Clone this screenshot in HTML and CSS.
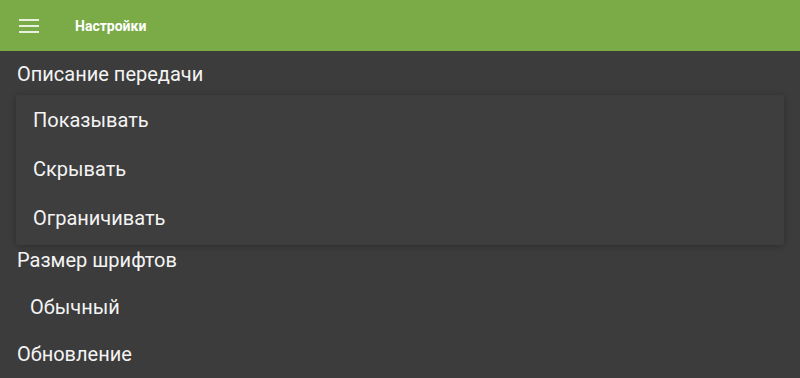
FILE: index.html
```html
<!DOCTYPE html>
<html lang="ru">

<head>
    <meta charset="UTF-8">
    <meta name="viewport" content="width=device-width, initial-scale=1.0">
    <link rel="stylesheet" href="styles.css">
    <title>Настройки</title>
</head>

<body>
    <div class="toolbar">
        <svg class="menu-icon" width="20" height="14" viewBox="0 0 20 14">
            <rect x="0" y="0" width="20" height="2" fill="#e8f0e0" />
            <rect x="0" y="6" width="20" height="2" fill="#e8f0e0" />
            <rect x="0" y="12" width="20" height="2" fill="#e8f0e0" />
        </svg>
        <div class="title">Настройки</div>
    </div>

    <div class="settings">
        <div class="pref">Описание передачи</div>
        <div class="popup">
            <div class="option">Показывать</div>
            <div class="option">Скрывать</div>
            <div class="option">Ограничивать</div>
        </div>
        <div class="pref">Размер шрифтов</div>
        <div class="value">Обычный</div>
        <div class="pref">Обновление</div>
    </div>
</body>

</html>
```

FILE: styles.css
```css
* {
    margin: 0;
    padding: 0;
    box-sizing: border-box;
}

body {
    background: #3c3c3c;
    font-family: Roboto, "Noto Sans", sans-serif;
    color: #f4f4f4;
    overflow: hidden;
}

.toolbar {
    height: 51px;
    background: #7aab47;
    display: flex;
    align-items: center;
    padding-left: 19px;
}

.menu-icon {
    display: block;
    margin-top: 1px;
}

.title {
    margin-left: 36px;
    font-size: 14px;
    font-weight: bold;
    color: #fff;
}

.settings {
    padding-top: 8px;
}

.pref {
    font-size: 20px;
    padding-left: 17px;
    height: 36px;
    line-height: 30px;
}

.popup {
    margin: 0 16px;
    height: 150px;
    background: #3e3e3e;
    box-shadow: 0 1px 6px rgba(0, 0, 0, 0.25);
    border-radius: 2px;
    padding-top: 3px;
}

.option {
    font-size: 20px;
    padding-left: 17px;
    height: 49px;
    line-height: 44px;
}

.value {
    font-size: 20px;
    padding-left: 30px;
    height: 58px;
    line-height: 52px;
}
```
